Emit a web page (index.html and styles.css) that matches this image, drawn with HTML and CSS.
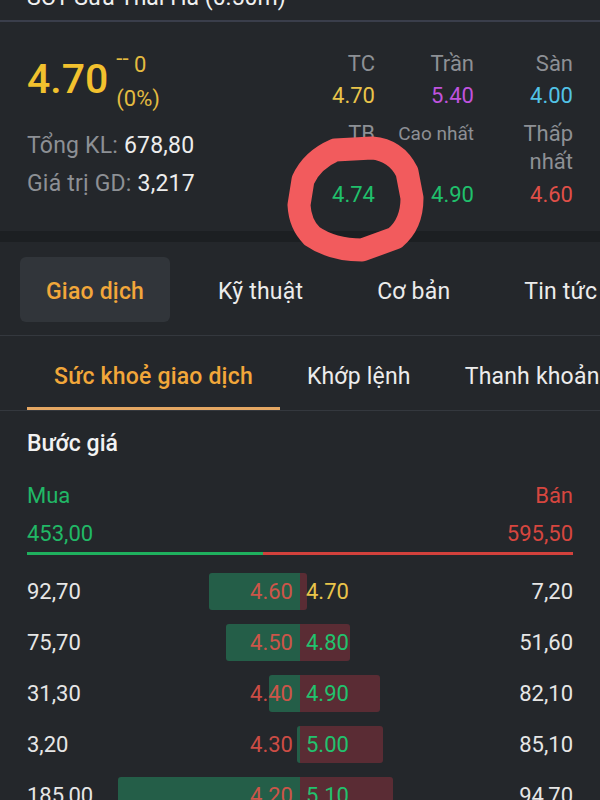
FILE: index.html
```html
<!DOCTYPE html>
<html lang="vi">
<head>
    <meta charset="UTF-8">
    <meta name="viewport" content="width=device-width, initial-scale=1.0">
    <title>Sữa Thái Hà - Giao dịch</title>
    <link rel="stylesheet" href="styles.css">
</head>
<body>
<div class="screen">

    <!-- Stock name (scrolled almost out of view) -->
    <div class="topbar">
        <span class="topbar-title">SCT Sữa Thái Hà (0.50m)</span>
    </div>

    <!-- Quote summary -->
    <section class="quote">
        <div class="quote-left">
            <div class="price-row">
                <div class="price">4.70</div>
                <div class="change">
                    <div><span class="dash">--</span> 0</div>
                    <div>(0%)</div>
                </div>
            </div>
            <div class="stat stat-first"><span class="stat-label">Tổng KL:</span> 678,80</div>
            <div class="stat"><span class="stat-label">Giá trị GD:</span> 3,217</div>
        </div>

        <div class="quote-grid">
            <div class="q-label">TC</div>
            <div class="q-label">Trần</div>
            <div class="q-label">Sàn</div>
            <div class="q-value ref">4.70</div>
            <div class="q-value ceil">5.40</div>
            <div class="q-value floor">4.00</div>
            <div class="q-label row2">TB</div>
            <div class="q-label row2 small">Cao nhất</div>
            <div class="q-label row2">Thấp<br>nhất</div>
            <div class="q-value up row2v">4.74</div>
            <div class="q-value up row2v">4.90</div>
            <div class="q-value down row2v">4.60</div>
        </div>
    </section>

    <div class="band"></div>

    <!-- Main tabs -->
    <nav class="tabs">
        <div class="tab active">Giao dịch</div>
        <div class="tab">Kỹ thuật</div>
        <div class="tab">Cơ bản</div>
        <div class="tab">Tin tức</div>
    </nav>

    <!-- Sub tabs -->
    <nav class="subtabs">
        <div class="subtab active">Sức khoẻ giao dịch</div>
        <div class="subtab">Khớp lệnh</div>
        <div class="subtab">Thanh khoản</div>
    </nav>

    <!-- Price steps -->
    <section class="depth">
        <div class="depth-title">Bước giá</div>
        <div class="side-row">
            <span class="buy-text">Mua</span>
            <span class="sell-text">Bán</span>
        </div>
        <div class="side-row side-total">
            <span class="buy-text">453,00</span>
            <span class="sell-text">595,50</span>
        </div>
        <div class="ratio">
            <div class="ratio-buy" style="width: 43.2%"></div>
            <div class="ratio-sell"></div>
        </div>

        <div class="rows">
            <div class="row">
                <div class="buy">
                    <span class="vol">92,70</span>
                    <span class="bar bar-buy" style="width: 91px"></span>
                    <span class="price-buy">4.60</span>
                </div>
                <div class="sell">
                    <span class="bar bar-sell" style="width: 7px"></span>
                    <span class="price-sell ref">4.70</span>
                    <span class="vol">7,20</span>
                </div>
            </div>
            <div class="row">
                <div class="buy">
                    <span class="vol">75,70</span>
                    <span class="bar bar-buy" style="width: 74px"></span>
                    <span class="price-buy">4.50</span>
                </div>
                <div class="sell">
                    <span class="bar bar-sell" style="width: 50px"></span>
                    <span class="price-sell">4.80</span>
                    <span class="vol">51,60</span>
                </div>
            </div>
            <div class="row">
                <div class="buy">
                    <span class="vol">31,30</span>
                    <span class="bar bar-buy" style="width: 31px"></span>
                    <span class="price-buy">4.40</span>
                </div>
                <div class="sell">
                    <span class="bar bar-sell" style="width: 80px"></span>
                    <span class="price-sell">4.90</span>
                    <span class="vol">82,10</span>
                </div>
            </div>
            <div class="row">
                <div class="buy">
                    <span class="vol">3,20</span>
                    <span class="bar bar-buy" style="width: 3px"></span>
                    <span class="price-buy">4.30</span>
                </div>
                <div class="sell">
                    <span class="bar bar-sell" style="width: 83px"></span>
                    <span class="price-sell">5.00</span>
                    <span class="vol">85,10</span>
                </div>
            </div>
            <div class="row">
                <div class="buy">
                    <span class="vol">185,00</span>
                    <span class="bar bar-buy" style="width: 182px"></span>
                    <span class="price-buy">4.20</span>
                </div>
                <div class="sell">
                    <span class="bar bar-sell" style="width: 93px"></span>
                    <span class="price-sell">5.10</span>
                    <span class="vol">94,70</span>
                </div>
            </div>
        </div>
    </section>

    <!-- Hand drawn marker around the average price -->
    <svg class="marker" width="600" height="800" viewBox="0 0 600 800">
        <path d="M 299 205 L 303 180 Q 312 160 335 150 L 372 148 Q 396 150 407 172 L 412 198 Q 412 224 395 238 L 362 250 Q 332 250 312 236 Q 300 224 299 205 Z"
              fill="none" stroke="#f25b5d" stroke-width="23" stroke-linejoin="round"/>
    </svg>
</div>
</body>
</html>
```

FILE: styles.css
```css
/* Basic styling */
body {
    margin: 0;
    background-color: #24272b;
    font-family: Roboto, "Noto Sans", sans-serif;
    color: #e6e6e6;
    font-size: 22px;
}

.screen {
    position: relative;
    width: 600px;
    height: 800px;
    overflow: hidden;
}

/* Top title strip */
.topbar {
    height: 20px;
    overflow: hidden;
    padding-left: 27px;
    border-bottom: 2px solid #3a3e4b;
}

.topbar-title {
    display: block;
    margin-top: -15px;
    font-size: 23px;
    line-height: 26px;
    color: #f0f0f0;
}

/* Quote summary */
.quote {
    display: flex;
    padding: 28px 27px 20px;
}

.quote-left {
    flex: 1;
}

.price-row {
    display: flex;
    align-items: flex-start;
}

.price {
    margin-top: 5px;
    font-size: 41px;
    font-weight: 500;
    line-height: 48px;
    color: #f2c12e;
}

.change {
    margin-top: -2.5px;
    margin-left: 8px;
    line-height: 34px;
    color: #e3bb40;
}

.dash {
    line-height: 0;
    vertical-align: 6px;
}

.stat {
    font-size: 23px;
    letter-spacing: 0.2px;
    line-height: 38px;
    color: #ededed;
}

.stat-first {
    margin-top: 11px;
}

.stat-label {
    color: #8d9095;
}

.quote-grid {
    display: grid;
    grid-template-columns: repeat(3, 99px);
    text-align: right;
}

.q-label {
    line-height: 28px;
    color: #8d9095;
}

.q-label.small {
    font-size: 19px;
}

.q-label.row2 {
    margin-top: 8px;
}

.q-value {
    margin-top: 2px;
    line-height: 32px;
}

.q-value.row2v {
    margin-top: 3px;
}

.ref { color: #e9c44a; }
.ceil { color: #c053de; }
.floor { color: #52c3e6; }
.up { color: #20c06c; }
.down { color: #df4f48; }

.band {
    height: 11px;
    background-color: #1c1f22;
}

/* Main tabs */
.tabs {
    display: flex;
    gap: 22px;
    padding: 15px 0 13px 20px;
    border-bottom: 1px solid #34383e;
    white-space: nowrap;
    overflow: hidden;
}

.tab {
    flex-shrink: 0;
    box-sizing: border-box;
    height: 65px;
    padding: 4px 26px 0;
    font-size: 23px;
    letter-spacing: 0.2px;
    line-height: 61px;
    color: #ececec;
    border-radius: 6px;
}

.tab.active {
    background-color: #31353a;
    color: #f2a73a;
    font-weight: 500;
}

/* Sub tabs */
.subtabs {
    display: flex;
    padding-left: 27px;
    border-bottom: 1px solid #34383e;
    white-space: nowrap;
    overflow: hidden;
}

.subtab {
    flex-shrink: 0;
    box-sizing: border-box;
    height: 74px;
    padding: 28px 27px 0;
    font-size: 23px;
    letter-spacing: 0.2px;
    line-height: 26px;
    color: #ececec;
    border-bottom: 3px solid transparent;
}

.subtab.active {
    color: #f2a73a;
    font-weight: 500;
    border-bottom-color: #e5a763;
}

/* Price steps */
.depth {
    padding: 0 27px;
}

.depth-title {
    margin-top: 19.5px;
    font-size: 23px;
    line-height: 26px;
    font-weight: 500;
    color: #f2f2f2;
}

.side-row {
    display: flex;
    justify-content: space-between;
    margin-top: 26px;
    line-height: 26px;
}

.side-row.side-total {
    margin-top: 12px;
}

.buy-text { color: #21b866; }
.sell-text { color: #d6463f; }

.ratio {
    display: flex;
    height: 3px;
    margin-top: 5.5px;
}

.ratio-buy {
    background-color: #1fb05e;
}

.ratio-sell {
    flex: 1;
    background-color: #d2413c;
}

.rows {
    display: flex;
    flex-direction: column;
    gap: 14px;
    margin-top: 18px;
}

.row {
    display: grid;
    grid-template-columns: 1fr 1fr;
    height: 37px;
    line-height: 37px;
}

.buy,
.sell {
    position: relative;
    display: flex;
    justify-content: space-between;
}

.vol {
    color: #e6e6e6;
}

.bar {
    position: absolute;
    top: 0;
    bottom: 0;
}

.bar-buy {
    right: 0;
    background-color: #245e48;
    border-radius: 3px 0 0 3px;
}

.bar-sell {
    left: 0;
    background-color: #5a2c34;
    border-radius: 0 3px 3px 0;
}

.price-buy {
    position: relative;
    padding-right: 7px;
    color: rgba(236, 84, 74, 0.85);
}

.price-sell {
    position: relative;
    padding-left: 6px;
    margin-right: auto;
    color: #22c26e;
}

.price-sell.ref {
    color: #e9c44a;
}

/* Marker overlay */
.marker {
    position: absolute;
    top: 0;
    left: 0;
    pointer-events: none;
}
```
